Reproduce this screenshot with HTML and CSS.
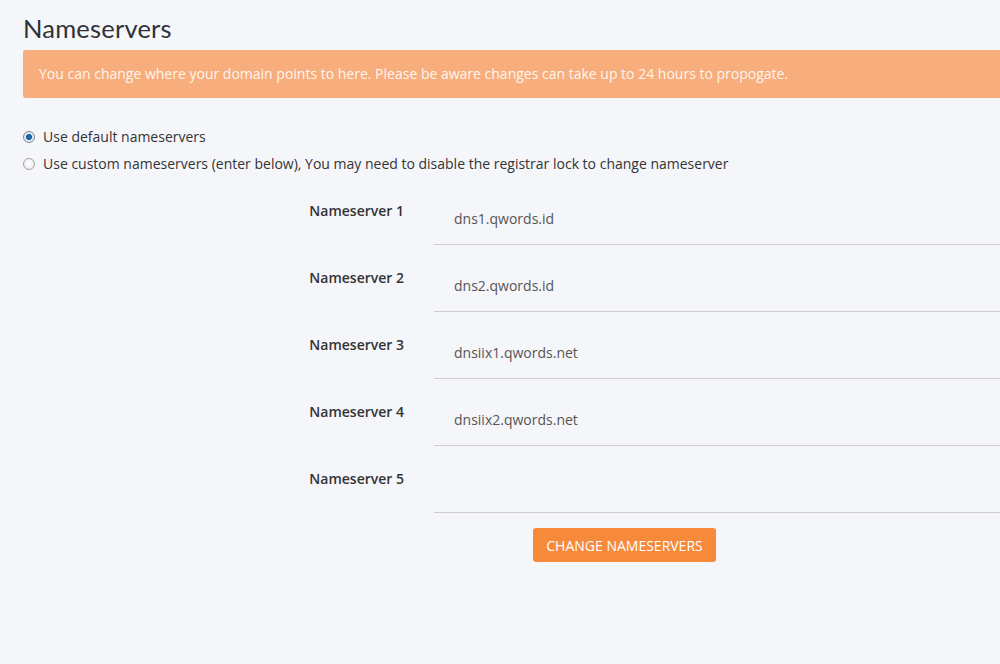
FILE: index.html
```html
<!DOCTYPE html>
<html>
<head>
<meta charset="utf-8">
<link rel="stylesheet" href="styles.css">
</head>
<body>
<div class="page">
  <h1 class="title">Nameservers</h1>
  <div class="alert">You can change where your domain points to here. Please be aware changes can take up to 24 hours to propogate.</div>

  <div class="radios">
    <label class="radio"><input type="radio" name="ns" checked><span>Use default nameservers</span></label>
    <label class="radio"><input type="radio" name="ns"><span>Use custom nameservers (enter below), You may need to disable the registrar lock to change nameserver</span></label>
  </div>

  <div class="form">
    <div class="row"><label class="lbl">Nameserver 1</label><input class="field" type="text" value="dns1.qwords.id"></div>
    <div class="row"><label class="lbl">Nameserver 2</label><input class="field" type="text" value="dns2.qwords.id"></div>
    <div class="row"><label class="lbl">Nameserver 3</label><input class="field" type="text" value="dnsiix1.qwords.net"></div>
    <div class="row"><label class="lbl">Nameserver 4</label><input class="field" type="text" value="dnsiix2.qwords.net"></div>
    <div class="row"><label class="lbl">Nameserver 5</label><input class="field" type="text" value=""></div>
    <div class="actions"><button class="btn" type="button">CHANGE NAMESERVERS</button></div>
  </div>
</div>
</body>
</html>
```

FILE: styles.css
```css
html, body {
  margin: 0;
  padding: 0;
  background: #f5f6fa;
  overflow: hidden;
}
body {
  font-family: "Open Sans", "Liberation Sans", sans-serif;
  font-size: 14px;
  color: #333;
}
.page {
  padding: 13px 0 0 23px;
}
.title {
  margin: 0;
  font-family: "Lato", "Open Sans", sans-serif;
  font-weight: 400;
  font-size: 25.5px;
  line-height: 30px;
  color: #2f3338;
  letter-spacing: 0.2px;
}
.alert {
  margin-top: 7px;
  background: #f7ad7c;
  color: #fff5ee;
  border-radius: 3px 0 0 3px;
  padding: 15px 16px;
  line-height: 18px;
  white-space: nowrap;
}
.radios {
  margin-top: 29px;
  display: flex;
  flex-direction: column;
  gap: 7px;
}
.radio {
  display: flex;
  align-items: center;
  gap: 8px;
  line-height: 20px;
  color: #333;
}
.radio input {
  appearance: none;
  -webkit-appearance: none;
  margin: 0;
  width: 12px;
  height: 12px;
  border-radius: 50%;
  border: 1px solid #a3a3a3;
  background: radial-gradient(circle at 50% 40%, #ffffff 0%, #e6e6e6 100%);
  box-sizing: border-box;
}
.radio input:checked {
  border-color: #7a8a99;
  background: radial-gradient(circle, #1f76c0 0, #155a96 2.5px, #dfe7ee 3.5px, #eef2f5 100%);
}
.form {
  margin-top: 17px;
  display: flex;
  flex-direction: column;
  gap: 13px;
}
.row {
  display: flex;
  align-items: flex-start;
  gap: 30px;
}
.lbl {
  width: 381px;
  flex: none;
  text-align: right;
  font-weight: 600;
  line-height: 20px;
  padding-top: 10px;
  color: #333;
  box-sizing: border-box;
}
.field {
  flex: 1;
  min-width: 0;
  height: 54px;
  border: none;
  border-bottom: 1px solid #cfcfcf;
  background: transparent;
  padding: 2px 20px 0;
  font-family: "Open Sans", "Liberation Sans", sans-serif;
  font-size: 14px;
  color: #555;
  box-sizing: border-box;
  outline: none;
}
.actions {
  margin-left: 411px;
  width: 381px;
  display: flex;
  justify-content: center;
  margin-top: 2px;
}
.btn {
  background: #f7893b;
  color: #fff;
  border: none;
  border-radius: 3px;
  height: 34px;
  padding: 0 13px;
  font-family: "Open Sans", "Liberation Sans", sans-serif;
  font-size: 14px;
  cursor: pointer;
}
```
